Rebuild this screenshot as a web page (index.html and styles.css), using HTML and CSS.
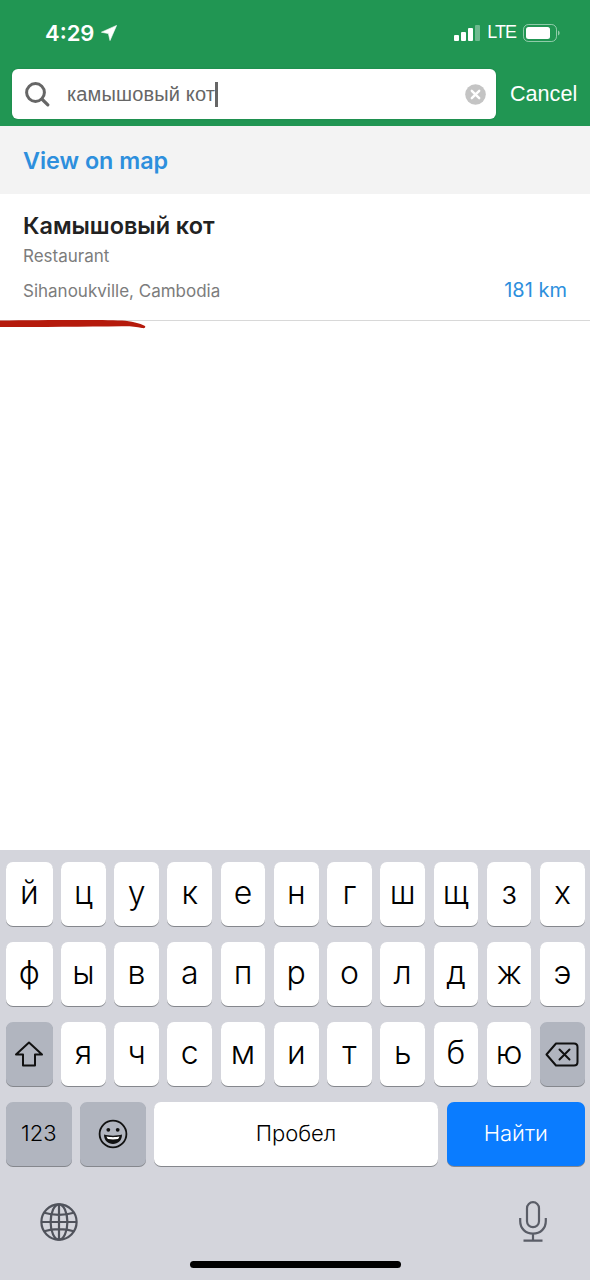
FILE: index.html
```html
<!DOCTYPE html>
<html lang="ru">
<head>
    <meta charset="UTF-8">
    <meta name="viewport" content="width=device-width, initial-scale=1.0">
    <title>Search</title>
    <link rel="stylesheet" href="styles.css">
</head>
<body>
    <div class="screen">
        <header class="top-bar">
            <div class="status-bar">
                <div class="status-left">
                    <span class="time">4:29</span>
                    <svg class="location-icon" width="16" height="16" viewBox="0 0 16 16"><path d="M15.6 0.4 L0.4 7.2 L7.4 8.6 L9 15.6 Z" fill="#fff" stroke="#fff" stroke-width="0.6" stroke-linejoin="round"/></svg>
                </div>
                <div class="status-right">
                    <div class="signal">
                        <span class="signal-bar bar-1"></span>
                        <span class="signal-bar bar-2"></span>
                        <span class="signal-bar bar-3"></span>
                        <span class="signal-bar bar-4"></span>
                    </div>
                    <span class="network">LTE</span>
                    <svg class="battery-icon" width="37" height="18" viewBox="0 0 37 18">
                        <rect x="0.5" y="0.5" width="33" height="17" rx="5" fill="none" stroke="#fff" stroke-opacity="0.5"/>
                        <rect x="3" y="3" width="24" height="12" rx="2.5" fill="#fff"/>
                        <path d="M35 6.5 C36.2 7 36.6 8 36.6 9 C36.6 10 36.2 11 35 11.5 Z" fill="#fff" fill-opacity="0.5"/>
                    </svg>
                </div>
            </div>
            <div class="search-row">
                <div class="search-box">
                    <svg class="search-icon" width="26" height="26" viewBox="0 0 26 26"><circle cx="11.5" cy="11.5" r="8.9" fill="none" stroke="#666" stroke-width="3"/><path d="M17.8 18 L23.8 23.8" stroke="#666" stroke-width="3.2" stroke-linecap="round"/></svg>
                    <span class="search-text">камышовый кот</span><span class="caret"></span>
                    <svg class="clear-icon" width="21" height="21" viewBox="0 0 21 21"><circle cx="10.5" cy="10.5" r="10.3" fill="#c4c4c4"/><path d="M6.8 6.8 L14.2 14.2 M14.2 6.8 L6.8 14.2" stroke="#fff" stroke-width="2.4" stroke-linecap="round"/></svg>
                </div>
                <span class="cancel">Cancel</span>
            </div>
        </header>

        <div class="map-link">View on map</div>

        <div class="result">
            <div class="result-title">Камышовый кот</div>
            <div class="result-type">Restaurant</div>
            <div class="result-bottom">
                <span>Sihanoukville, Cambodia</span>
                <span class="distance">181 km</span>
            </div>
        </div>
        <!-- hand drawn marker under the result -->
        <svg class="marker" width="148" height="12" viewBox="0 0 148 12"><path d="M0 1.6 C40 1.2 95 0.6 122 1.6 C131 2 140 4.6 145 7 C146 8.4 144.4 9.6 142 9 C136 7.6 130 7 122 7.2 C85 7.6 40 8 0 8 Z" fill="#b51a0c"/></svg>

        <div class="content"></div>

        <div class="keyboard">
            <div class="key-row">
                <div class="key">й</div><div class="key">ц</div><div class="key">у</div><div class="key">к</div><div class="key">е</div><div class="key">н</div><div class="key">г</div><div class="key">ш</div><div class="key">щ</div><div class="key">з</div><div class="key">х</div>
            </div>
            <div class="key-row">
                <div class="key">ф</div><div class="key">ы</div><div class="key">в</div><div class="key">а</div><div class="key">п</div><div class="key">р</div><div class="key">о</div><div class="key">л</div><div class="key">д</div><div class="key">ж</div><div class="key">э</div>
            </div>
            <div class="key-row">
                <div class="key key-dark">
                    <svg width="30" height="26" viewBox="0 0 30 26"><path d="M15 1.5 L28 13.5 L21 13.5 L21 24.5 L9 24.5 L9 13.5 L2 13.5 Z" fill="none" stroke="#111" stroke-width="2" stroke-linejoin="round"/></svg>
                </div>
                <div class="key">я</div><div class="key">ч</div><div class="key">с</div><div class="key">м</div><div class="key">и</div><div class="key">т</div><div class="key">ь</div><div class="key">б</div><div class="key">ю</div>
                <div class="key key-dark">
                    <svg width="34" height="25" viewBox="0 0 34 25"><path d="M11 1.5 L29 1.5 C31.5 1.5 32.5 2.5 32.5 5 L32.5 20 C32.5 22.5 31.5 23.5 29 23.5 L11 23.5 L1.5 12.5 Z" fill="none" stroke="#111" stroke-width="2" stroke-linejoin="round"/><path d="M14.5 7.5 L24.5 17.5 M24.5 7.5 L14.5 17.5" stroke="#111" stroke-width="2" stroke-linecap="round"/></svg>
                </div>
            </div>
            <div class="key-row-bottom">
                <div class="key key-dark key-small">123</div>
                <div class="key key-dark">
                    <svg width="30" height="30" viewBox="0 0 30 30"><circle cx="15" cy="15" r="13.4" fill="none" stroke="#111" stroke-width="1.8"/><circle cx="10.3" cy="10.8" r="1.9" fill="#111"/><circle cx="19.7" cy="10.8" r="1.9" fill="#111"/><path d="M6 15.5 C11 17 19 17 24 15.5 C24 21.5 20 25 15 25 C10 25 6 21.5 6 15.5 Z" fill="#111"/><path d="M8.6 17.6 C12 18.4 18 18.4 21.4 17.6 C21 19 20.6 19.6 20 20 C17 20.5 13 20.5 10 20 C9.4 19.6 9 19 8.6 17.6 Z" fill="#fff"/></svg>
                </div>
                <div class="key key-small">Пробел</div>
                <div class="key key-small key-blue">Найти</div>
            </div>
            <div class="keyboard-extra">
                <svg width="38" height="38" viewBox="0 0 38 38" fill="none" stroke="#50535c" stroke-width="2.2"><circle cx="19" cy="19" r="17.6"/><ellipse cx="19" cy="19" rx="8.4" ry="17.6"/><path d="M19 1.4 V36.6 M1.4 19 H36.6 M4.2 9.8 C13 12.6 25 12.6 33.8 9.8 M4.2 28.2 C13 25.4 25 25.4 33.8 28.2"/></svg>
                <svg width="28" height="41" viewBox="0 0 28 41" fill="none" stroke="#5a5d67" stroke-width="2.2"><rect x="8" y="1.2" width="12" height="25" rx="6"/><path d="M1.2 17 V20 C1.2 27.5 6.5 32.6 14 32.6 C21.5 32.6 26.8 27.5 26.8 20 V17 M14 32.6 V39.4 M4.5 39.6 H23.5"/></svg>
            </div>
            <div class="home-indicator"></div>
        </div>
    </div>
</body>
</html>
```

FILE: styles.css
```css
body {
    margin: 0;
    font-family: Inter, "Noto Sans", sans-serif;
    background-color: #fff;
}
.screen {
    position: relative;
    width: 590px;
    height: 1280px;
    display: flex;
    flex-direction: column;
    overflow: hidden;
}
.top-bar {
    height: 126px;
    background-color: #219653;
    box-sizing: border-box;
    flex-shrink: 0;
}
.status-bar {
    height: 69px;
    box-sizing: border-box;
    padding: 19px 30px 0 46px;
    display: flex;
    justify-content: space-between;
    align-items: flex-start;
    color: #fff;
}
.status-left {
    display: flex;
    align-items: center;
    gap: 7px;
    height: 27px;
}
.time {
    font-size: 22px;
    font-weight: 600;
    margin-left: -1px;
}
.status-right {
    display: flex;
    align-items: center;
    gap: 5px;
    height: 27px;
}
.signal {
    display: flex;
    align-items: flex-end;
    gap: 2px;
    height: 16px;
}
.signal-bar {
    width: 5px;
    background-color: #fff;
    border-radius: 1px;
}
.bar-1 { height: 6px; }
.bar-2 { height: 9px; }
.bar-3 { height: 13px; }
.bar-4 { height: 16px; opacity: 0.35; }
.network {
    font-family: "Liberation Sans", sans-serif;
    font-size: 18px;
    letter-spacing: -1px;
    margin-left: 2px;
    margin-right: 2px;
}
.search-row {
    display: flex;
    align-items: center;
    padding-left: 12px;
}
.search-box {
    width: 484px;
    height: 50px;
    box-sizing: border-box;
    background-color: #fff;
    border-radius: 6px;
    display: flex;
    align-items: center;
    padding: 0 10px 0 12px;
    box-shadow: 0 0 2px rgba(0, 0, 0, 0.15);
}
.search-text {
    margin-left: 17px;
    font-size: 20px;
    letter-spacing: 0.15px;
    color: #666;
    font-family: "Liberation Sans", sans-serif;
}
.caret {
    width: 3px;
    height: 25px;
    background-color: #666;
}
.clear-icon {
    margin-left: auto;
}
.cancel {
    margin-left: 14px;
    font-size: 21.6px;
    color: #fff;
    font-family: "Liberation Sans", sans-serif;
}
.map-link {
    height: 68px;
    line-height: 70px;
    padding-left: 23px;
    background-color: #f3f3f3;
    color: #2d8fdd;
    font-size: 23.3px;
    font-weight: 600;
    flex-shrink: 0;
}
.result {
    height: 127px;
    box-sizing: border-box;
    padding: 17px 23px 0;
    border-bottom: 1px solid #d8d8d8;
    flex-shrink: 0;
}
.result-title {
    font-size: 23.4px;
    font-weight: 600;
    color: #222;
    line-height: 30px;
}
.result-type {
    font-size: 17px;
    color: #7c7c7c;
    margin-top: 4px;
    line-height: 22px;
}
.result-bottom {
    display: flex;
    justify-content: space-between;
    align-items: baseline;
    font-size: 17px;
    color: #7c7c7c;
    margin-top: 12px;
    line-height: 22px;
}
.distance {
    color: #2d8fdd;
    font-size: 20px;
}
.marker {
    position: absolute;
    left: 0;
    top: 319px;
}
.content {
    flex: 1;
}
.keyboard {
    height: 430px;
    box-sizing: border-box;
    padding: 12px 5px 0 6px;
    background-color: #d4d5dc;
    position: relative;
    flex-shrink: 0;
}
.key-row {
    display: grid;
    grid-template-columns: 46.5px repeat(9, 1fr) 45px;
    gap: 8.5px;
    margin-bottom: 16px;
}
.key-row-bottom {
    display: grid;
    grid-template-columns: 65.5px 65.5px 284px 1fr;
    column-gap: 8.5px;
}
.key {
    height: 64px;
    box-sizing: border-box;
    padding-bottom: 4px;
    display: flex;
    align-items: center;
    justify-content: center;
    background-color: #fff;
    border-radius: 7px;
    box-shadow: 0 1px 0 #85878d;
    font-size: 32px;
    font-weight: 300;
    color: #000;
}
.key-dark {
    background-color: #b1b5bf;
    padding-bottom: 0;
}
.key-small {
    font-size: 22px;
    padding-bottom: 3px;
}
.key-blue {
    background-color: #0a7cff;
    color: #fff;
}
.keyboard-extra {
    display: flex;
    justify-content: space-between;
    padding: 35px 38px 0 34px;
    align-items: center;
}
.home-indicator {
    position: absolute;
    left: 190px;
    top: 411px;
    width: 211px;
    height: 7px;
    border-radius: 4px;
    background-color: #000;
}
```
